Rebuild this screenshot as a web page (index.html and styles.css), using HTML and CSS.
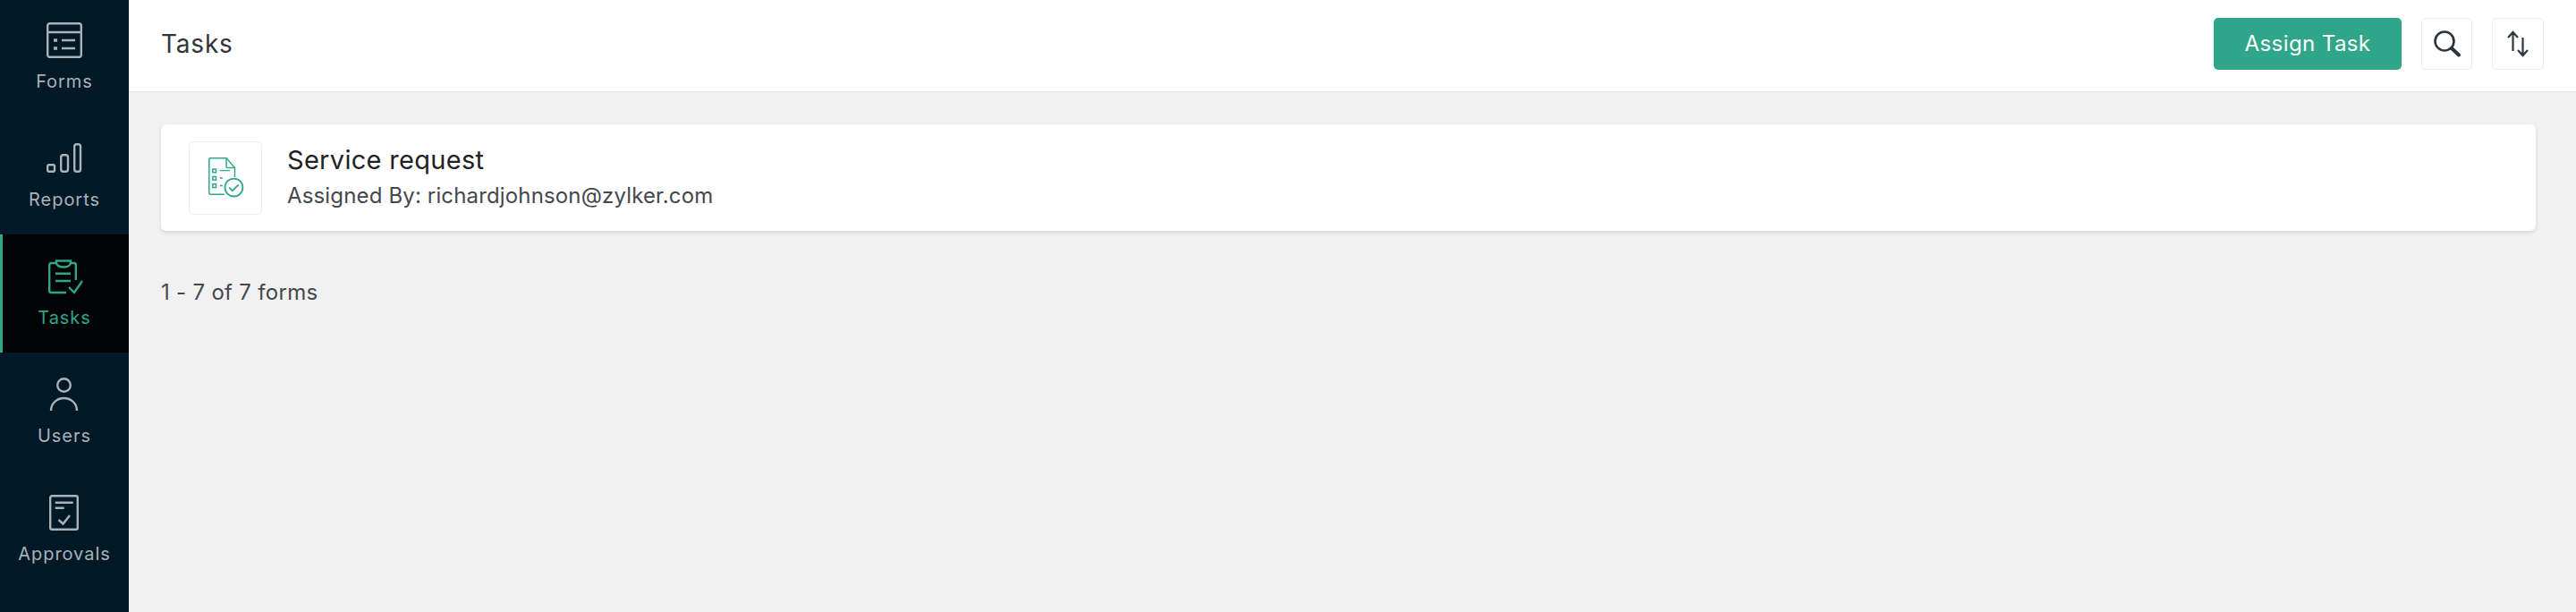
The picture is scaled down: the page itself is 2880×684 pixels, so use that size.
FILE: index.html
```html
<!DOCTYPE html>
<html lang="en">
<head>
<meta charset="utf-8">
<title>Tasks</title>
<link rel="stylesheet" href="styles.css">
</head>
<body>
<div class="app">
  <nav class="sidebar">
    <a class="nav-item">
      <svg class="nav-icon" viewBox="0 0 44 44" fill="none" stroke="currentColor" stroke-width="2.4"><rect x="3.200" y="3.200" width="37.600" height="37.600" rx="2.500"/><path d="M3 13h38"/><path d="M10 22h4M10 31h4" stroke-width="3.400"/><path d="M19 22h15M19 31h15"/></svg>
      <span>Forms</span>
    </a>
    <a class="nav-item">
      <svg class="nav-icon" viewBox="0 0 44 44" fill="none" stroke="currentColor" stroke-width="2.4"><rect x="3.200" y="29.200" width="7.800" height="7.600" rx="1.500"/><rect x="18.200" y="18.200" width="7.800" height="18.600" rx="2.500"/><rect x="33.200" y="6.200" width="6.800" height="30.600" rx="2.500"/></svg>
      <span>Reports</span>
    </a>
    <a class="nav-item active">
      <svg class="nav-icon" viewBox="0 0 44 44" fill="none" stroke="currentColor" stroke-width="2.4"><path d="M34.800 26V9a2 2 0 0 0-2-2H29M13 7H7.200a2 2 0 0 0-2 2v29a2 2 0 0 0 2 2H24"/><path d="M13 4.500h16v2c0 3-3.500 5-8 5s-8-2-8-5z"/><path d="M12 18.700h17M12 27h17"/><path d="M27 34l6 6 9-13"/></svg>
      <span>Tasks</span>
    </a>
    <a class="nav-item">
      <svg class="nav-icon" viewBox="0 0 44 44" fill="none" stroke="currentColor" stroke-width="2.4"><circle cx="21.500" cy="11.500" r="7.300"/><path d="M7 40c0-8 6.500-14 14.500-14S36 32 36 40"/></svg>
      <span>Users</span>
    </a>
    <a class="nav-item">
      <svg class="nav-icon" viewBox="0 0 44 44" fill="none" stroke="currentColor" stroke-width="2.4"><rect x="6.200" y="3.200" width="30.600" height="37.600" rx="2"/><path d="M11.700 10.700h20M11.700 16.700h10"/><path d="M15.500 30l5 4.500L28 25"/></svg>
      <span>Approvals</span>
    </a>
  </nav>
  <div class="main">
    <header class="topbar">
      <h1 class="page-title">Tasks</h1>
      <div class="actions">
        <button class="primary-btn">Assign Task</button>
        <button class="icon-btn search-btn">
          <svg width="30" height="30" viewBox="0 0 30 30" fill="none" stroke="#30353d"><circle cx="12" cy="12" r="10.500" stroke-width="2.600"/><path d="M20 20l8 7.500" stroke-width="4" stroke-linecap="round"/></svg>
        </button>
        <button class="icon-btn sort-btn">
          <svg width="24" height="30" viewBox="0 0 24 30" fill="none" stroke="#30353d" stroke-width="2.200"><path d="M6.500 2v21M1 8l5.500-6L12 8"/><path d="M17.500 8v20M12 22l5.500 6 5.500-6"/></svg>
        </button>
      </div>
    </header>
    <section class="content">
      <article class="task-card">
        <div class="task-icon">
          <svg class="task-glyph" width="38" height="43" viewBox="0 0 38 43" fill="none" stroke="#2fa68a" stroke-width="1.400"><path d="M28 21V11L19 .7H2a1.300 1.300 0 0 0-1.300 1.300v36A1.300 1.300 0 0 0 2 39.300h15"/><path d="M19 .7V10a1 1 0 0 0 1 1h8"/><rect x="4.500" y="12.500" width="3.500" height="3.500"/><rect x="4.500" y="20.500" width="3.500" height="3.500"/><rect x="4.500" y="28.500" width="3.500" height="3.500"/><path d="M12 14h11M12 22h3M12 30h3"/><circle cx="27" cy="32" r="9.500" stroke-width="1.700"/><path d="M22 32l3.500 3.500 6.500-6.500" stroke-width="1.700"/></svg>
        </div>
        <div class="task-text">
          <div class="task-title">Service request</div>
          <div class="task-sub">Assigned By: richardjohnson@zylker.com</div>
        </div>
      </article>
      <p class="count">1 - 7 of 7 forms</p>
    </section>
  </div>
</div>
</body>
</html>
```

FILE: styles.css
```css
* { box-sizing: border-box; }
html, body { margin: 0; height: 100%; }
body { font-family: Inter, "Liberation Sans", sans-serif; background: #f1f1f1; overflow: hidden; }
.app { display: flex; height: 684px; }

.sidebar { width: 144px; flex: none; background: #011826; display: flex; flex-direction: column; }
.nav-item { height: 132px; flex: none; display: flex; flex-direction: column; align-items: center; padding: 25px 0 0; color: #a9b2b9; font-size: 20px; letter-spacing: 0.95px; line-height: 24px; gap: 12px; }
.nav-item:first-child { height: 130px; padding-top: 23px; }
.nav-icon { width: 44px; height: 44px; display: block; flex: none; }
.nav-item.active { background: #010305; color: #2fa68a; box-shadow: inset 3px 0 0 #2fa68a; }

.main { flex: 1; min-width: 0; display: flex; flex-direction: column; }
.topbar { height: 103px; background: #fff; border-bottom: 1px solid #e7e7e7; display: flex; align-items: center; justify-content: space-between; padding: 0 36px 5px 36px; }
.page-title { margin: 0; font-size: 28px; font-weight: 400; color: #31353b; letter-spacing: 0.8px; }
.actions { display: flex; align-items: center; gap: 22px; }
.primary-btn { width: 210px; height: 58px; border: 0; border-radius: 5px; background: #2fa68a; color: #fff; font: 400 24px Inter, sans-serif; letter-spacing: 0.4px; padding: 0; }
.icon-btn { height: 58px; background: #fff; border: 1px solid #ececec; border-radius: 5px; padding: 0; display: flex; align-items: center; justify-content: center; }
.search-btn { width: 57px; }
.sort-btn { width: 58px; }

.content { padding: 36px 45px 0 36px; }
.task-card { height: 119px; background: #fff; border-radius: 6px; box-shadow: 0 2px 4px rgba(0,0,0,.12); display: flex; align-items: center; padding: 0 31px; gap: 28px; }
.task-icon { width: 82px; height: 82px; border: 1px solid #ececec; border-radius: 5px; display: flex; align-items: center; justify-content: center; flex: none; }
.task-glyph { transform: scale(1.05) translateX(1px); }
.task-text { display: flex; flex-direction: column; gap: 8px; padding-bottom: 2px; }
.task-title { font-size: 29px; line-height: 34px; color: #1f2226; letter-spacing: 0.3px; }
.task-sub { font-size: 24px; line-height: 30px; color: #44474c; letter-spacing: 0.15px; }
.count { margin: 54px 0 0; font-size: 24px; line-height: 30px; color: #44474c; letter-spacing: 0.3px; }
```
